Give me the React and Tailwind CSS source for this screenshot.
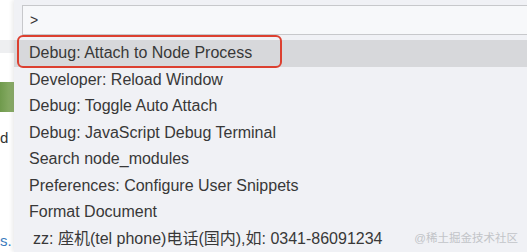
export default function App() {
  const items = [
    "Debug: Attach to Node Process",
    "Developer: Reload Window",
    "Debug: Toggle Auto Attach",
    "Debug: JavaScript Debug Terminal",
    "Search node_modules",
    "Preferences: Configure User Snippets",
    "Format Document",
  ];
  return (
    <div
      className="flex w-[527px] h-[252px] overflow-hidden bg-white"
      style={{ fontFamily: '"Liberation Sans", "Noto Sans CJK SC", sans-serif' }}
    >
      <div className="w-[14px] shrink-0 bg-white flex flex-col text-[15px] leading-none">
        <div className="h-[40px]" />
        <div className="h-[13px] bg-[#eeeff1]" />
        <div className="h-[29px]" />
        <div className="h-[30px] bg-gradient-to-r from-[#6f9a4c] to-[#8fb06d]" />
        <div className="h-[18px]" />
        <div className="h-[20px] text-[#333]">d</div>
        <div className="h-[83px]" />
        <div className="text-[#3b7bbd]">s.</div>
      </div>
      <div className="relative flex-1 bg-[#f0f1f5] shadow-[-2px_0_4px_rgba(0,0,0,0.08)]">
        <div className="ml-[8px] mr-[-10px] mt-[5px] h-[30px] flex items-center border border-[#c7c8cb] bg-[#f7f8fa] pl-[7px] text-[14px] text-[#333]">
          &gt;
        </div>
        <div className="mt-[5px] flex flex-col">
          {items.map((t, i) => (
            <div
              key={t}
              className={
                "h-[26.5px] flex items-center pl-[15px] text-[16px] text-[#383838] " +
                (i === 0 ? "bg-[#d7d8db]" : "")
              }
            >
              {t}
            </div>
          ))}
          <div className="h-[26.5px] flex items-center pl-[19px] text-[16px] text-[#383838]">
            <span>zz: 座机(tel phone)电话(国内),如: 0341-86091234</span>
          </div>
        </div>
        <div className="absolute left-[3px] top-[35px] w-[265px] h-[33px] rounded-[6px] border-2 border-[#dc4030]" />
        <div className="absolute right-[9px] top-[230px] text-[11.5px] text-[#c2c4c8]">@稀土掘金技术社区</div>
      </div>
    </div>
  );
}
